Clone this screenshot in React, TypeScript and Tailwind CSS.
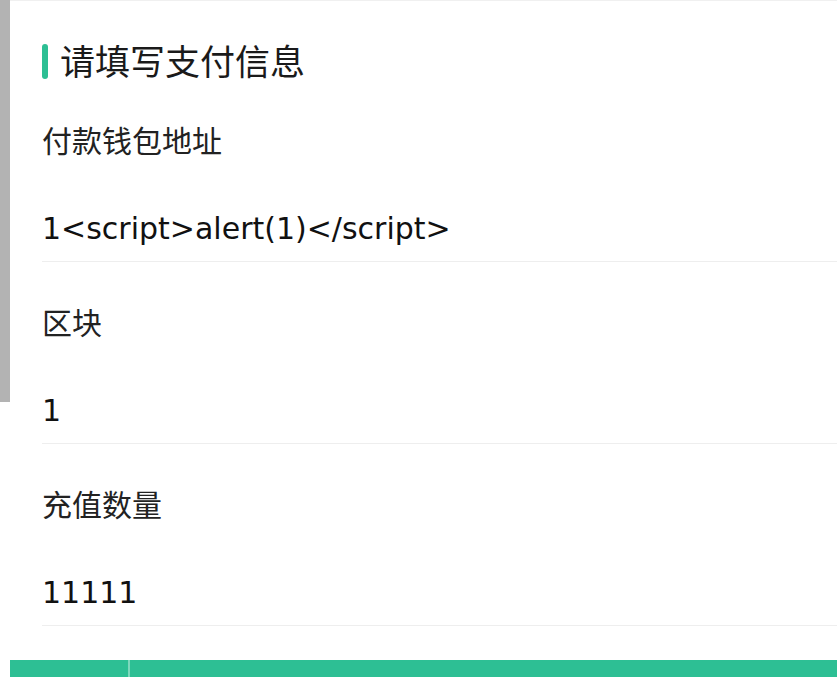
import React from "react";

const fields = [
  { label: "付款钱包地址", value: "1<script>alert(1)</script>" },
  { label: "区块", value: "1" },
  { label: "充值数量", value: "11111" },
];

export default function App() {
  return (
    <div
      className="flex w-[837px] h-[677px] overflow-hidden bg-white"
      style={{ fontFamily: '"Noto Sans", "Noto Sans CJK SC", sans-serif' }}
    >
      <div className="w-[10px] h-[402px] shrink-0 bg-[#b3b3b3]" />
      <div className="flex-1 flex flex-col">
        <div className="h-[2px] bg-[#f0f0f0]" />
        <div className="pl-[32px]">
          <div className="mt-[43px] h-[36px] flex items-center gap-[12px]">
            <div className="w-[6px] h-[35px] rounded-full bg-[#2dbf94]" />
            <div className="text-[35px] leading-[36px] text-[#1a1a1a]">请填写支付信息</div>
          </div>
          {fields.map((f) => (
            <div key={f.label} className="border-b border-[#eeeeee] pb-[12px]">
              <div className="mt-[41px] h-[40px] leading-[40px] text-[30px] text-[#222]">{f.label}</div>
              <div
                className="mt-[48px] h-[40px] leading-[40px] text-[30px] text-[#111]"
                style={{ fontFamily: '"DejaVu Sans", "Noto Sans CJK SC", sans-serif' }}
              >
                {f.value}
              </div>
            </div>
          ))}
        </div>
        <div className="mt-[34px] h-[40px] bg-[#2dbf94] flex">
          <div className="w-[120px] border-r-2 border-[#7fd8bd]" />
        </div>
      </div>
    </div>
  );
}
